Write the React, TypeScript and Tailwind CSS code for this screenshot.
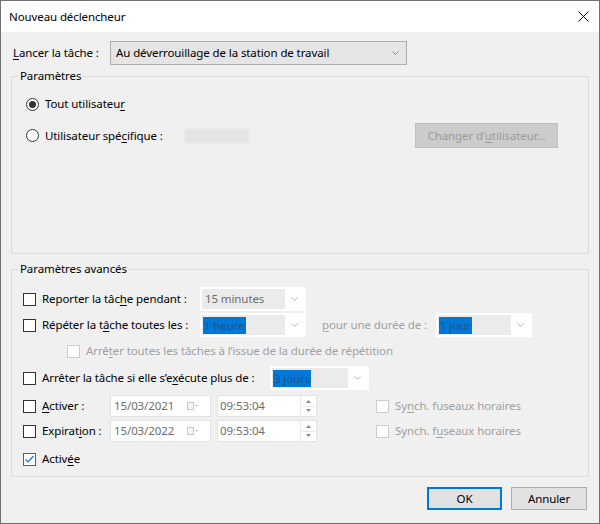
import React from 'react';

// Windows 10 style "Nouveau déclencheur" dialog (Task Scheduler)

function U({ children }: { children: React.ReactNode }) {
  return <span className="underline decoration-1 underline-offset-2">{children}</span>;
}

function Check({ checked = false, disabled = false }: { checked?: boolean; disabled?: boolean }) {
  const border = checked ? 'border-[#0078d7]' : disabled ? 'border-[#cccccc]' : 'border-[#333333]';
  return (
    <span className={`flex h-[13px] w-[13px] shrink-0 items-center justify-center border bg-white ${border}`}>
      {checked && (
        <svg width="11" height="11" viewBox="0 0 11 11" aria-hidden="true">
          <polyline points="1.5,5.5 4,8 9.5,2" fill="none" stroke="#0078d7" strokeWidth="1.2" />
        </svg>
      )}
    </span>
  );
}

function Radio({ checked = false }: { checked?: boolean }) {
  return (
    <span className="flex h-[13px] w-[13px] shrink-0 items-center justify-center rounded-full border border-[#333333] bg-white">
      {checked && <span className="h-[7px] w-[7px] rounded-full bg-[#333333]" />}
    </span>
  );
}

function Chevron({ color }: { color: string }) {
  return (
    <svg width="7" height="4" viewBox="0 0 7 4" aria-hidden="true">
      <polyline points="0.5,0.5 3.5,3.5 6.5,0.5" fill="none" stroke={color} />
    </svg>
  );
}

function Combo({ width, text, selected = false }: { width: string; text: string; selected?: boolean }) {
  return (
    <div className={`flex h-[24px] shrink-0 bg-white p-[2px] ${width}`}>
      <div className="flex flex-1 items-center bg-[#ebebeb] pl-[1px]">
        {selected ? (
          <span className="bg-[#0078d7] px-[1px] leading-[17px] text-[#22528a]">{text}</span>
        ) : (
          <span className="pl-[2px] text-[#6d6d6d]">{text}</span>
        )}
      </div>
      <div className="flex w-[19px] items-center justify-center">
        <Chevron color="#b4b4b4" />
      </div>
    </div>
  );
}

function DateField({ value }: { value: string }) {
  return (
    <div className="flex h-[22px] w-[101px] shrink-0 items-center border border-[#e3e3e3] bg-white pl-[3px] text-[#6d6d6d]">
      <span className="flex-1">{value}</span>
      <svg width="12" height="8" viewBox="0 0 12 8" className="mr-[11px]" aria-hidden="true">
        <rect x="0.5" y="0.5" width="6" height="7" fill="#f6f6f6" stroke="#c8c8c8" />
        <polygon points="8,3 11,3 9.5,4.5" fill="#b0b0b0" />
      </svg>
    </div>
  );
}

function TimeField({ value }: { value: string }) {
  return (
    <div className="flex h-[22px] w-[100px] shrink-0 items-center border border-[#e3e3e3] bg-white pl-[2px] text-[#6d6d6d]">
      <span className="flex-1">{value}</span>
      <div className="flex h-full w-[16px] flex-col border-l border-[#e8e8e8] p-[1px]">
        <div className="flex flex-1 items-center justify-center border-b border-[#e8e8e8]">
          <svg width="5" height="3" viewBox="0 0 5 3" aria-hidden="true">
            <polygon points="0,3 2.5,0 5,3" fill="#8a8a8a" />
          </svg>
        </div>
        <div className="flex flex-1 items-center justify-center">
          <svg width="5" height="3" viewBox="0 0 5 3" aria-hidden="true">
            <polygon points="0,0 5,0 2.5,3" fill="#8a8a8a" />
          </svg>
        </div>
      </div>
    </div>
  );
}

export default function App() {
  return (
    <div className="flex h-[524px] w-[600px] flex-col border border-[#707070] font-['Noto_Sans',sans-serif] text-[11.5px] leading-[16px] tracking-[-0.1px] text-black">
      {/* Title bar */}
      <div className="flex h-[31px] shrink-0 items-center justify-between bg-white pl-[8px] pr-[10px]">
        <span>Nouveau déclencheur</span>
        <svg width="11" height="11" viewBox="0 0 11 11" aria-hidden="true">
          <path d="M0.5 0.5 L10.5 10.5 M10.5 0.5 L0.5 10.5" stroke="#000" strokeWidth="1" />
        </svg>
      </div>

      {/* Body */}
      <div className="flex flex-1 flex-col bg-[#f0f0f0]">
        <div className="ml-[12px] mt-[9px] flex h-[24px] items-center">
          <span className="w-[97px]">
            <U>L</U>ancer la tâche :
          </span>
          <div className="flex h-[24px] w-[297px] items-center justify-between border border-[#adadad] bg-[#e5e5e5] pl-[5px] pr-[7px]">
            <span>Au déverrouillage de la station de travail</span>
            <Chevron color="#8a8a8a" />
          </div>
        </div>

        <fieldset className="mx-[10px] mt-[3px] h-[186px] border border-[#dcdcdc]">
          <legend className="ml-[7px] px-[1px]">Paramètres</legend>
          <div className="ml-[14px] mt-[12px] flex h-[16px] items-center gap-[6px]">
            <Radio checked />
            <span>
              Tout utilisateu<U>r</U>
            </span>
          </div>
          <div className="ml-[14px] mr-[30px] mt-[11px] flex h-[25px] items-center">
            <Radio />
            <span className="ml-[6px] w-[140px]">
              Utilisateur spé<U>c</U>ifique :
            </span>
            <span className="h-[14px] w-[64px] bg-[#e4e4e4] blur-[1px]" />
            <div className="ml-auto flex h-[25px] w-[143px] items-center justify-center border border-[#bfbfbf] bg-[#cccccc] text-[#9a9a9a]">
              Changer d’<U>u</U>tilisateur...
            </div>
          </div>
        </fieldset>

        <fieldset className="mx-[10px] mt-[7px] h-[216px] border border-[#dcdcdc]">
          <legend className="ml-[7px] px-[1px]">Paramètres avancés</legend>

          <div className="ml-[11px] mt-[10px] flex h-[24px] items-center">
            <Check />
            <span className="ml-[6px] w-[158px]">
              Reporter la tâc<U>h</U>e pendant :
            </span>
            <Combo width="w-[106px]" text="15 minutes" />
          </div>

          <div className="ml-[11px] mt-[2px] flex h-[24px] items-center">
            <Check />
            <span className="ml-[6px] w-[158px]">
              Répéter la t<U>â</U>che toutes les :
            </span>
            <Combo width="w-[106px]" text="1 heure" selected />
            <span className="ml-[16px] w-[114px] text-[#a0a0a0]">
              <U>p</U>our une durée de :
            </span>
            <Combo width="w-[96px]" text="1 jour" selected />
          </div>

          <div className="ml-[55px] mt-[2px] flex h-[24px] items-center">
            <Check disabled />
            <span className="ml-[6px] text-[#a0a0a0]">
              Arrê<U>t</U>er toutes les tâches à l’issue de la durée de répétition
            </span>
          </div>

          <div className="ml-[11px] mt-[3px] flex h-[24px] items-center">
            <Check />
            <span className="ml-[6px] w-[228px]">
              Arrêter la tâche si elle s’e<U>x</U>écute plus de :
            </span>
            <Combo width="w-[99px]" text="3 jours" selected />
          </div>

          <div className="ml-[11px] mt-[5px] flex h-[22px] items-center">
            <Check />
            <span className="ml-[6px] w-[68px]">
              <U>A</U>ctiver :
            </span>
            <DateField value="15/03/2021" />
            <span className="ml-[6px]">
              <TimeField value="09:53:04" />
            </span>
            <span className="ml-[59px]">
              <Check disabled />
            </span>
            <span className="ml-[6px] text-[#a0a0a0]">
              Sy<U>n</U>ch. fuseaux horaires
            </span>
          </div>

          <div className="ml-[11px] mt-[3px] flex h-[22px] items-center">
            <Check />
            <span className="ml-[6px] w-[68px]">
              Expirat<U>i</U>on :
            </span>
            <DateField value="15/03/2022" />
            <span className="ml-[6px]">
              <TimeField value="09:53:04" />
            </span>
            <span className="ml-[59px]">
              <Check disabled />
            </span>
            <span className="ml-[6px] text-[#a0a0a0]">
              Synch. f<U>u</U>seaux horaires
            </span>
          </div>

          <div className="ml-[11px] mt-[9px] flex h-[16px] items-center">
            <Check checked />
            <span className="ml-[6px]">
              Activ<U>é</U>e
            </span>
          </div>
        </fieldset>

        <div className="mr-[12px] mt-[10px] flex justify-end gap-[9px]">
          <button type="button" className="flex h-[23px] w-[75px] items-center justify-center border-2 border-[#0078d7] bg-[#e1e1e1]">
            OK
          </button>
          <button type="button" className="flex h-[23px] w-[76px] items-center justify-center border border-[#adadad] bg-[#e1e1e1]">
            Annuler
          </button>
        </div>
      </div>
    </div>
  );
}
